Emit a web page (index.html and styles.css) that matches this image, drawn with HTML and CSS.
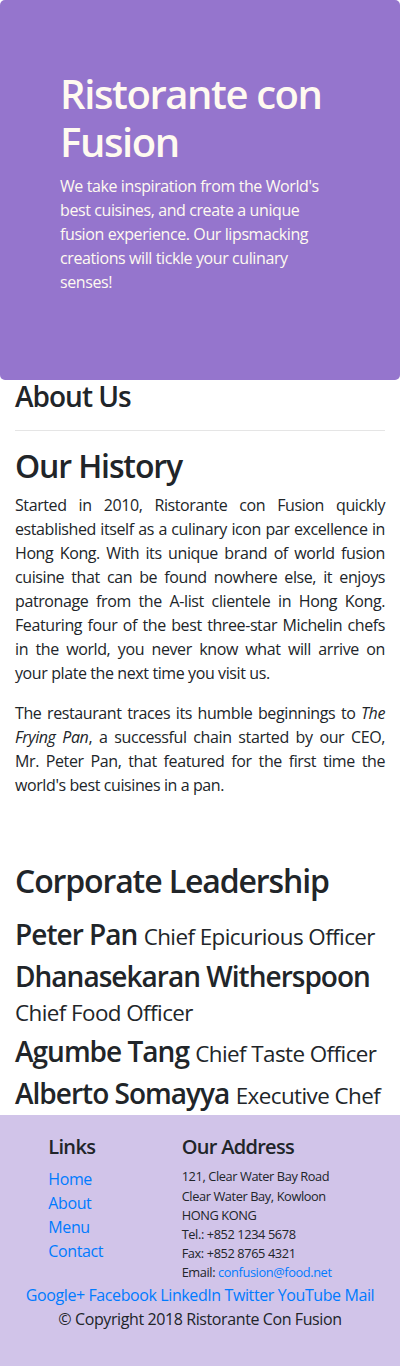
FILE: index.html
```html
<!DOCTYPE html>
<html lang="en">
<head>
<meta charset="utf-8">
<title>Ristorante con Fusion: About Us</title>
<link rel="stylesheet" href="styles.css">
</head>
<body>
<header class="jumbotron">
  <div class="jumbo-inner">
    <h1 class="jumbo-title">Ristorante con Fusion</h1>
    <p class="jumbo-text">We take inspiration from the World's best cuisines, and create a unique fusion experience. Our lipsmacking creations will tickle your culinary senses!</p>
  </div>
</header>

<main class="container">
  <section class="about-head">
    <h3 class="page-title">About Us</h3>
    <hr class="divider">
  </section>

  <section class="history">
    <h2 class="section-title">Our History</h2>
    <p class="body-text">Started in 2010, Ristorante con Fusion quickly established itself as a culinary icon par excellence in Hong Kong. With its unique brand of world fusion cuisine that can be found nowhere else, it enjoys patronage from the A-list clientele in Hong Kong. Featuring four of the best three-star Michelin chefs in the world, you never know what will arrive on your plate the next time you visit us.</p>
    <p class="body-text">The restaurant traces its humble beginnings to <em>The Frying Pan</em>, a successful chain started by our CEO, Mr. Peter Pan, that featured for the first time the world's best cuisines in a pan.</p>
  </section>

  <section class="leaders">
    <h2 class="section-title leaders-title">Corporate Leadership</h2>
    <h3 class="leader">Peter Pan <small class="leader-role">Chief Epicurious Officer</small></h3>
    <h3 class="leader">Dhanasekaran Witherspoon <small class="leader-role">Chief Food Officer</small></h3>
    <h3 class="leader">Agumbe Tang <small class="leader-role">Chief Taste Officer</small></h3>
    <h3 class="leader leader-last">Alberto Somayya <small class="leader-role">Executive Chef</small></h3>
  </section>
</main>

<footer class="footer">
  <div class="footer-row">
    <div class="footer-links">
      <h5 class="footer-title">Links</h5>
      <ul class="link-list">
        <li><a href="#">Home</a></li>
        <li><a href="#">About</a></li>
        <li><a href="#">Menu</a></li>
        <li><a href="#">Contact</a></li>
      </ul>
    </div>
    <div class="footer-address">
      <h5 class="footer-title">Our Address</h5>
      <address class="address">
        121, Clear Water Bay Road<br>
        Clear Water Bay, Kowloon<br>
        HONG KONG<br>
        Tel.: +852 1234 5678<br>
        Fax: +852 8765 4321<br>
        Email: <a href="mailto:confusion@food.net">confusion@food.net</a>
      </address>
    </div>
  </div>
  <div class="social">
    <a href="#">Google+</a>
    <a href="#">Facebook</a>
    <a href="#">LinkedIn</a>
    <a href="#">Twitter</a>
    <a href="#">YouTube</a>
    <a href="#">Mail</a>
  </div>
  <p class="copyright">© Copyright 2018 Ristorante Con Fusion</p>
</footer>
</body>
</html>
```

FILE: styles.css
```css
html, body {
  margin: 0;
  padding: 0;
}
body {
  font-family: "Open Sans", "Noto Sans", sans-serif;
  font-size: 16px;
  line-height: 1.5;
  letter-spacing: -0.025em;
  color: #212529;
  background: #fff;
}
a {
  color: #007bff;
  text-decoration: none;
}
h1, h2, h3, h5 {
  font-weight: 600;
  line-height: 1.2;
  margin: 0 0 8px;
  letter-spacing: -0.035em;
}

/* Jumbotron */
.jumbotron {
  background: #9575CD;
  color: floralwhite;
  padding: 70px 30px;
  border-radius: 5px;
}
.jumbo-inner {
  padding: 0 30px;
}
.jumbo-title {
  font-size: 40px;
  margin: 0 0 8px;
}
.jumbo-text {
  margin: 0 0 16px;
}

/* Main */
.container {
  padding: 0 15px;
}
.page-title {
  font-size: 28px;
  margin: 0;
}
.divider {
  margin: 16px 0;
  border: 0;
  border-top: 1px solid rgba(0, 0, 0, 0.1);
}
.section-title {
  font-size: 32px;
}
.body-text {
  margin: 0 0 16px;
  text-align: justify;
}
.leaders {
  padding-top: 49px;
}
.leaders-title {
  margin-bottom: 18px;
}
.leader {
  font-size: 28px;
}
.leader-last {
  margin-bottom: 5px;
}
.leader-role {
  font-size: 80%;
  font-weight: 400;
  letter-spacing: -0.025em;
}

/* Footer */
.footer {
  background: #D1C4E9;
  padding: 20px 0;
}
.footer-row {
  display: grid;
  grid-template-columns: 133.33px 233.33px;
  padding-left: 33.33px;
}
.footer-links, .footer-address {
  padding: 0 15px;
}
.footer-title {
  font-size: 20px;
}
.link-list {
  list-style: none;
  margin: 0;
  padding: 0;
}
.address {
  font-style: normal;
  font-size: 12.8px;
  line-height: 19.2px;
  margin: 0;
}
.social {
  text-align: center;
  padding: 0 15px;
}
.copyright {
  text-align: center;
  margin: 0 0 16px;
  padding: 0 15px;
}
```
